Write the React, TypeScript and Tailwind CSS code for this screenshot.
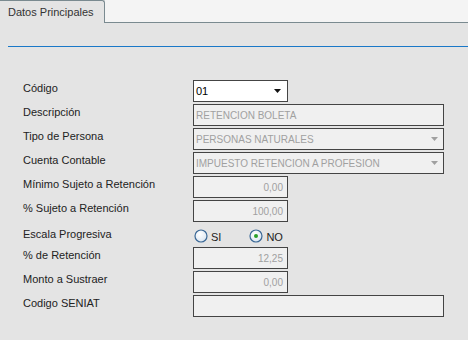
import React from "react";

const label = "h-[22px] text-[11px] leading-[16px] text-[#222]";
const box =
  "h-[22px] border border-[#444] bg-[#f0f0f0] text-[10px] text-[#a0a0a0] flex items-center";

function Arrow({ color }: { color: string }) {
  return (
    <svg width="7" height="4" viewBox="0 0 7 4" className="shrink-0">
      <path d="M0 0h7L3.5 4z" fill={color} />
    </svg>
  );
}

function Radio({ checked, text }: { checked?: boolean; text: string }) {
  return (
    <div className="flex items-center gap-[3px]">
      <svg width="14" height="14" viewBox="0 0 14 14">
        <defs>
          <radialGradient id={"g" + text} cx="0.4" cy="0.35" r="0.7">
            <stop offset="0" stopColor="#ffffff" />
            <stop offset="1" stopColor="#d8e4f0" />
          </radialGradient>
        </defs>
        <circle cx="7" cy="7" r="6" fill={`url(#g${text})`} stroke="#3a6896" strokeWidth="1.2" />
        {checked && <circle cx="7" cy="7" r="2" fill="#2aa02a" />}
      </svg>
      <span className="text-[11px] text-[#222] mt-[3px]">{text}</span>
    </div>
  );
}

export default function App() {
  return (
    <div className="w-[468px] h-[340px] bg-[#e4e4e4] font-['Liberation_Sans',Arial,sans-serif] overflow-hidden">
      <div className="flex h-[23px]">
        <div className="w-[105px] border-t border-r border-[#7a8a90] rounded-tr-[3px] pl-[8px] text-[11px] leading-[22px] text-[#333]">
          Datos Principales
        </div>
        <div className="flex-1 bg-[#f4f4f4] border-b border-[#7a8a90]" />
      </div>
      <div className="mt-[23px] ml-[8px] h-px bg-[#1a78c8]" />

      <div className="mt-[33px] pl-[23px] grid grid-cols-[170px_auto] gap-y-[2px]">
        <div className={label}>Código</div>
        <div className="h-[22px] w-[95px] border border-[#444] bg-white flex items-center justify-between pl-[2px] pr-[6px] text-[11px] text-black">
          <span>01</span>
          <Arrow color="#111" />
        </div>

        <div className={label}>Descripción</div>
        <div className={box + " w-[251px] pl-[2px]"}>RETENCION BOLETA</div>

        <div className={label}>Tipo de Persona</div>
        <div className={box + " w-[251px] pl-[2px] pr-[5px] justify-between"}>
          <span>PERSONAS NATURALES</span>
          <Arrow color="#a0a0a0" />
        </div>

        <div className={label}>Cuenta Contable</div>
        <div className={box + " w-[251px] pl-[2px] pr-[5px] justify-between"}>
          <span>IMPUESTO RETENCION A PROFESION</span>
          <Arrow color="#a0a0a0" />
        </div>

        <div className={label}>Mínimo Sujeto a Retención</div>
        <div className={box + " w-[95px] justify-end pr-[4px]"}>0,00</div>

        <div className={label}>% Sujeto a Retención</div>
        <div className={box + " w-[95px] justify-end pr-[4px]"}>100,00</div>

        <div className="h-[21px] text-[11px] leading-[14px] text-[#222] pt-[3px]">Escala Progresiva</div>
        <div className="h-[21px] flex items-start pt-[2px] pl-[1px] gap-[28px]">
          <Radio text="SI" />
          <Radio text="NO" checked />
        </div>

        <div className={label}>% de Retención</div>
        <div className={box + " w-[95px] justify-end pr-[4px]"}>12,25</div>

        <div className={label}>Monto a Sustraer</div>
        <div className={box + " w-[95px] justify-end pr-[4px]"}>0,00</div>

        <div className={label}>Codigo SENIAT</div>
        <div className={box + " w-[251px]"} />
      </div>
    </div>
  );
}
